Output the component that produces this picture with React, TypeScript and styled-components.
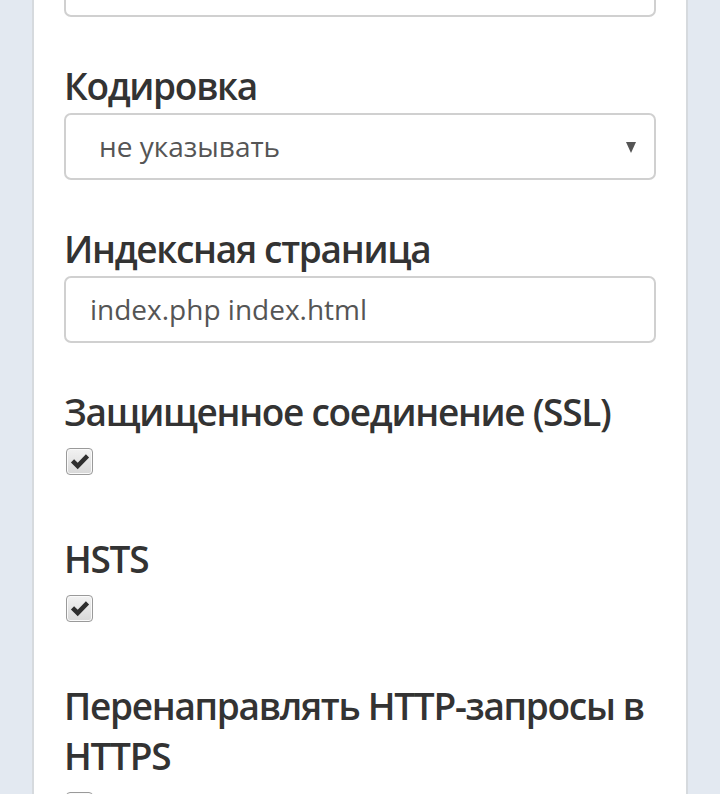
import React from 'react';
import styled, { createGlobalStyle } from 'styled-components';

const GlobalStyle = createGlobalStyle`
  html, body {
    margin: 0;
    padding: 0;
    background: #e3e9f1;
    overflow: hidden;
  }
  body {
    font-family: "Open Sans", "Noto Sans", sans-serif;
    color: #333;
  }
`;

const Card = styled.div`
  margin: 0 32px;
  background: #fff;
  border-left: 2px solid #d6dade;
  border-right: 2px solid #d6dade;
  padding: 0 30px;
  height: 794px;
  overflow: hidden;
`;

const Form = styled.div`
  margin-top: -52px;
  display: flex;
  flex-direction: column;
`;

const Group = styled.div`
  display: flex;
  flex-direction: column;
  align-items: flex-start;
  margin-bottom: 44px;
`;

const Label = styled.label`
  font-size: 37px;
  font-weight: 600;
  letter-spacing: -1.3px;
  line-height: 50px;
  color: #333;
`;

const Field = styled.div<{ $pad?: number }>`
  box-sizing: border-box;
  align-self: stretch;
  height: 67px;
  margin-top: 2px;
  border: 2px solid #d0d0d0;
  border-radius: 7px;
  display: flex;
  align-items: center;
  padding: 0 24px 2px ${p => p.$pad ?? 24}px;
  font-size: 28px;
  color: #555;
  position: relative;
`;

const Arrow = styled.span`
  position: absolute;
  right: 18px;
  top: 27px;
  width: 0;
  height: 0;
  border-left: 5px solid transparent;
  border-right: 5px solid transparent;
  border-top: 11px solid #555;
`;

const Box = styled.span`
  box-sizing: border-box;
  width: 27px;
  height: 27px;
  margin: 11px 0 15px 2px;
  border: 1.5px solid #9a9a9a;
  border-radius: 4px;
  background: linear-gradient(#f2f2f2, #d8d8d8);
  display: flex;
  align-items: center;
  justify-content: center;
  box-shadow: inset 0 0 0 1px #fafafa;
`;

const Check = () => (
  <svg width="20" height="17" viewBox="0 0 22 18">
    <path d="M1 10 L4.5 6.5 L8.5 10.5 L17.5 1 L21 4.5 L8.5 17.5 Z" fill="#2e2e2e" />
  </svg>
);

const CheckBox = () => (
  <Box>
    <Check />
  </Box>
);

export default function App() {
  return (
    <>
      <GlobalStyle />
      <Card>
        <Form>
          <Group>
            <Field />
          </Group>
          <Group>
            <Label>Кодировка</Label>
            <Field $pad={33}>
              не указывать
              <Arrow />
            </Field>
          </Group>
          <Group>
            <Label>Индексная страница</Label>
            <Field>index.php index.html</Field>
          </Group>
          <Group>
            <Label>Защищенное соединение (SSL)</Label>
            <CheckBox />
          </Group>
          <Group>
            <Label>HSTS</Label>
            <CheckBox />
          </Group>
          <Group>
            <Label>Перенаправлять HTTP-запросы в HTTPS</Label>
            <CheckBox />
          </Group>
        </Form>
      </Card>
    </>
  );
}
